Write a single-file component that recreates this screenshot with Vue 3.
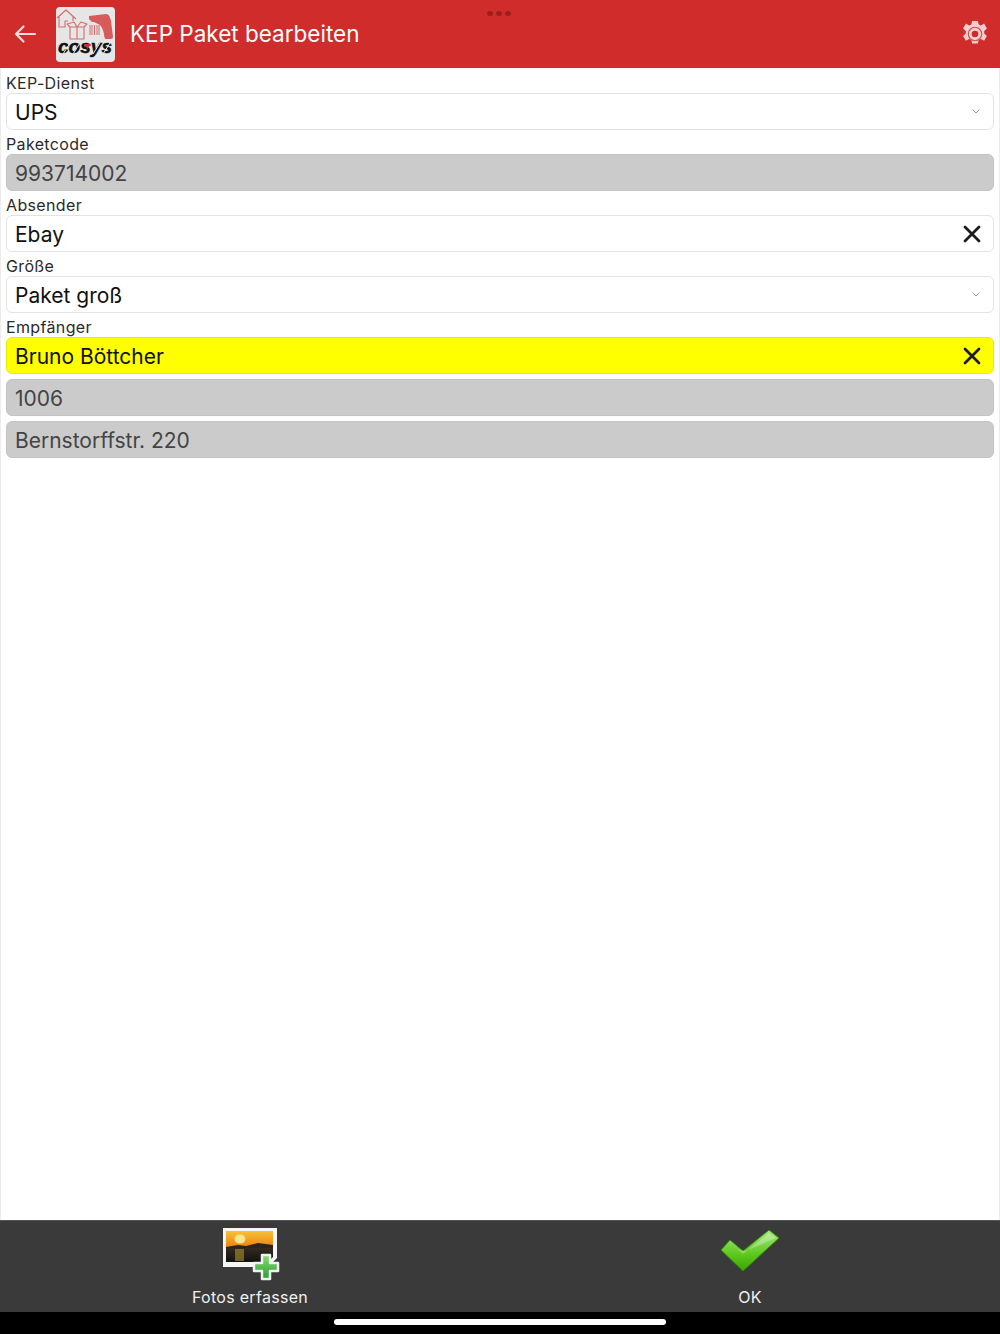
<script setup>
const fields = [
  { label: 'KEP-Dienst', value: 'UPS', kind: 'select' },
  { label: 'Paketcode', value: '993714002', kind: 'readonly' },
  { label: 'Absender', value: 'Ebay', kind: 'clear' },
  { label: 'Größe', value: 'Paket groß', kind: 'select' },
  { label: 'Empfänger', value: 'Bruno Böttcher', kind: 'clear', highlight: true },
  { value: '1006', kind: 'readonly' },
  { value: 'Bernstorffstr. 220', kind: 'readonly' },
]
</script>

<template>
  <div class="app">
    <header class="topbar">
      <span class="dots" aria-hidden="true"><i></i><i></i><i></i></span>
      <button type="button" class="back" aria-label="Zurück">
        <svg width="24" height="20" viewBox="0 0 24 20" fill="none">
          <path d="M22 10H3M10.500 2.500 3 10l7.500 7.500" stroke="#fbdcdc" stroke-width="2.200" stroke-linecap="round" stroke-linejoin="round" />
        </svg>
      </button>
      <div class="logo">
        <svg width="59" height="55" viewBox="0 0 59 55" fill="none">
          <g stroke="#d96a6a" stroke-width="1.100" stroke-linejoin="round">
            <path d="M1 11 10 3l10 9M3 9.500V20h6v-6h3M17 9.500V14" />
            <path d="M14 20h14v12H14zM14 20l-3-3 7-2 3 5M28 20l3-3-6-2-4 5M21 20v12" />
          </g>
          <g stroke="#d96a6a">
            <path d="M34 18v10M36 18v10M38.500 18v10M41 18v10M43 18v10" />
          </g>
          <path d="M33 9 50 7c3 0 4 3 5 7l2 16c0 2-2 2-4 2h-3c-1 0-2-2-2-5-1-5-3-9-6-10l-4-2h-2l-3-3z" fill="#d85a5a" />
          <text x="2" y="45.500" class="logo-word" textLength="54" lengthAdjust="spacingAndGlyphs">cosys</text>
          <path d="M7 47 14 36M17 47 24 36M37 47 44 36M47 47 54 36" stroke="#e6e6e6" stroke-width="1" />
          <path d="M28 37h7l-3.500 5z" fill="#d12c2c" />
        </svg>
      </div>
      <h1 class="title">KEP Paket bearbeiten</h1>
      <svg class="gear" width="28" height="28" viewBox="0 0 28 28" aria-label="Einstellungen">
        <path fill="#f5cfcf" d="M11.200.8h5.600l.9 3.600 2.200.9 3.200-1.900 2.800 4.900-2.700 2.500v2.400l2.700 2.500-2.800 4.900-3.200-1.900-2.200.9-.9 3.600h-5.600l-.9-3.600-2.200-.9-3.200 1.900-2.800-4.900 2.700-2.500v-2.400L2.100 8.300l2.800-4.900 3.200 1.900 2.200-.9z" transform="translate(0 .2)" />
        <circle cx="14" cy="14" r="6.700" fill="none" stroke="#d84a4a" stroke-width="1.100" />
        <circle cx="14" cy="14" r="3.300" fill="#c92a2a" />
      </svg>
    </header>

    <main class="form">
      <div v-for="field in fields" :key="field.value" class="field">
        <label v-if="field.label" class="label">{{ field.label }}</label>
        <div
          class="box"
          :class="{ 'box--readonly': field.kind === 'readonly', 'box--highlight': field.highlight }"
        >
          <span class="value">{{ field.value }}</span>
          <svg v-if="field.kind === 'select'" class="chevron" width="8" height="5" viewBox="0 0 8 5" fill="none">
            <path d="M1 1l3 3 3-3" stroke="#9a9a9a" stroke-width="1" stroke-linecap="round" />
          </svg>
          <svg v-if="field.kind === 'clear'" class="clear" width="18" height="18" viewBox="0 0 18 18" fill="none">
            <path d="M2 2l14 14M16 2 2 16" stroke="#1c1c1c" stroke-width="2.800" stroke-linecap="round" />
          </svg>
        </div>
      </div>
    </main>

    <footer class="actions">
      <button type="button" class="action">
        <svg width="60" height="54" viewBox="0 0 60 54">
          <defs>
            <linearGradient id="sky" x1="0" y1="0" x2="0" y2="1">
              <stop offset="0" stop-color="#f7c238" />
              <stop offset="0.5" stop-color="#ee8414" />
              <stop offset="0.56" stop-color="#33291f" />
              <stop offset="1" stop-color="#121210" />
            </linearGradient>
            <linearGradient id="plus" x1="0" y1="0" x2="0" y2="1">
              <stop offset="0" stop-color="#86dc70" />
              <stop offset="1" stop-color="#2c9c33" />
            </linearGradient>
          </defs>
          <path d="M3 0h54v30l-9 9H3z" fill="#f6f6f6" />
          <path d="M6 3h47v26l-5 5H6z" fill="url(#sky)" />
          <ellipse cx="20" cy="11" rx="5.500" ry="4.500" fill="#fde58c" />
          <path d="M6 19l12-2 8 1 12-3 15 2v3H6z" fill="#2a2420" />
          <rect x="15" y="21" width="9" height="12" fill="#a08a2c" opacity="0.65" />
          <path d="M34 35h8v-8h8v8h8v8h-8v8h-8v-8h-8z" fill="url(#plus)" stroke="#f0f0f0" stroke-width="2.500" stroke-linejoin="round" />
        </svg>
        <span class="action-label">Fotos erfassen</span>
      </button>
      <button type="button" class="action">
        <svg width="60" height="54" viewBox="0 0 60 54">
          <defs>
            <linearGradient id="check" x1="0" y1="0" x2="0" y2="1">
              <stop offset="0" stop-color="#a9e884" />
              <stop offset="0.6" stop-color="#5cc81c" />
              <stop offset="1" stop-color="#3aa305" />
            </linearGradient>
          </defs>
          <path d="M1 22 10 12 23 23 49 2l10 8-36 33z" fill="url(#check)" stroke="#338f06" stroke-width="1" stroke-linejoin="round" />
          <path d="M10 14 23 26 49 5l7 5-28 12c-6 2-12-1-18-8z" fill="#fff" opacity="0.28" />
        </svg>
        <span class="action-label">OK</span>
      </button>
    </footer>

    <div class="home-bar"><span></span></div>
  </div>
</template>

<style>
html,
body {
  margin: 0;
  background: #fff;
}
</style>

<style scoped>
.app {
  width: 1000px;
  height: 1334px;
  display: flex;
  flex-direction: column;
  font-family: Inter, 'Liberation Sans', Arial, sans-serif;
  background: #fff;
  overflow: hidden;
}

.topbar {
  position: relative;
  height: 68px;
  flex-shrink: 0;
  display: flex;
  align-items: center;
  background: #d12c2c;
  padding: 0 11px 0 13px;
  box-sizing: border-box;
}

.dots {
  position: absolute;
  top: 11px;
  left: 487px;
  display: flex;
  gap: 3px;
}

.dots i {
  width: 6px;
  height: 5px;
  border-radius: 50%;
  background: #9c1f1f;
}

.back {
  all: unset;
  display: flex;
  width: 24px;
  height: 20px;
}

.logo {
  margin-left: 19px;
  width: 59px;
  height: 55px;
  border-radius: 4px;
  background: #e6e6e6;
}

.logo-word {
  font: italic 700 19px 'Liberation Sans', sans-serif;
  fill: #111;
  stroke: #111;
  stroke-width: 0.5px;
}

.title {
  margin: 0 0 2px 15px;
  flex: 1;
  font-size: 22.500px;
  font-weight: 400;
  color: #fff;
}

.form {
  flex: 1;
  padding: 6px 5px 0;
  border-left: 1px solid #ececec;
  border-right: 1px solid #ececec;
  display: flex;
  flex-direction: column;
  gap: 5px;
  box-sizing: border-box;
}

.label {
  display: block;
  height: 19px;
  font-size: 16px;
  line-height: 19px;
  letter-spacing: 0.35px;
  color: #2a2a2a;
}

.box {
  height: 37px;
  box-sizing: border-box;
  display: flex;
  align-items: center;
  justify-content: space-between;
  padding: 0 12px 0 8px;
  background: #fff;
  border: 1px solid #e3e3e3;
  border-radius: 6px;
}

.box--readonly {
  background: #cbcbcb;
  border-color: #c4c4c4;
}

.box--readonly .value {
  color: #444;
}

.box--highlight {
  background: #ffff00;
  border-color: #ecec00;
}

.value {
  margin-top: 2px;
  font-size: 21px;
  color: #111;
}

.chevron {
  margin-right: 1px;
}

.actions {
  height: 92px;
  flex-shrink: 0;
  display: grid;
  grid-template-columns: 1fr 1fr;
  background: #3a3a3a;
  border-top: 1px solid #555;
  box-sizing: border-box;
}

.action {
  all: unset;
  display: flex;
  flex-direction: column;
  align-items: center;
  padding-top: 7px;
}

.action-label {
  margin-top: 5px;
  font-size: 16px;
  line-height: 20px;
  letter-spacing: 0.3px;
  color: #f0f0f0;
}

.home-bar {
  height: 22px;
  flex-shrink: 0;
  background: #000;
  display: flex;
  justify-content: center;
  padding-top: 7px;
  box-sizing: border-box;
}

.home-bar span {
  width: 332px;
  height: 6px;
  border-radius: 3px;
  background: #fff;
}
</style>
